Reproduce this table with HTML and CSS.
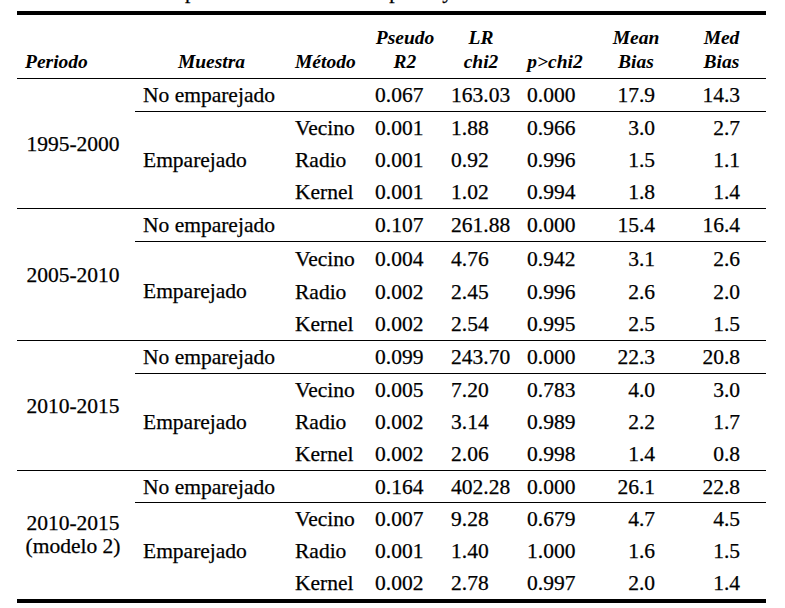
FILE: index.html
```html
<!DOCTYPE html>
<html lang="es">
<head>
<meta charset="utf-8">
<title>Calidad del emparejamiento</title>
<link rel="stylesheet" href="styles.css">
</head>
<body>
<div class="caption">Cuadro 4. Comparación de calidad del pareo y balance</div>
<table class="tbl">
  <colgroup>
    <col class="w1"><col class="w2"><col class="w3"><col class="w4"><col class="w5"><col class="w6"><col class="w7"><col class="w8">
  </colgroup>
  <thead>
    <tr class="head">
      <th class="h-per">Periodo</th>
      <th class="h-mue">Muestra</th>
      <th class="h-met">Método</th>
      <th class="h-ps">Pseudo<br>R2</th>
      <th class="h-lr">LR<br>chi2</th>
      <th class="h-p">p&gt;chi2</th>
      <th class="h-mean">Mean<br>Bias</th>
      <th class="h-med">Med<br>Bias</th>
    </tr>
  </thead>
  <tbody>
    <tr class="g1">
      <td class="c-per ln" rowspan="4">1995-2000</td>
      <td class="c-mue ln" colspan="2">No emparejado</td>
      <td class="c-num ln">0.067</td><td class="c-num ln">163.03</td><td class="c-num ln">0.000</td><td class="c-r7 ln">17.9</td><td class="c-r8 ln">14.3</td>
    </tr>
    <tr class="g1">
      <td class="c-mue ln" rowspan="3">Emparejado</td>
      <td class="c-met">Vecino</td><td class="c-num">0.001</td><td class="c-num">1.88</td><td class="c-num">0.966</td><td class="c-r7">3.0</td><td class="c-r8">2.7</td>
    </tr>
    <tr class="g1">
      <td class="c-met">Radio</td><td class="c-num">0.001</td><td class="c-num">0.92</td><td class="c-num">0.996</td><td class="c-r7">1.5</td><td class="c-r8">1.1</td>
    </tr>
    <tr class="g1">
      <td class="c-met ln">Kernel</td><td class="c-num ln">0.001</td><td class="c-num ln">1.02</td><td class="c-num ln">0.994</td><td class="c-r7 ln">1.8</td><td class="c-r8 ln">1.4</td>
    </tr>

    <tr class="g2">
      <td class="c-per ln" rowspan="4">2005-2010</td>
      <td class="c-mue ln" colspan="2">No emparejado</td>
      <td class="c-num ln">0.107</td><td class="c-num ln">261.88</td><td class="c-num ln">0.000</td><td class="c-r7 ln">15.4</td><td class="c-r8 ln">16.4</td>
    </tr>
    <tr class="g2">
      <td class="c-mue ln" rowspan="3">Emparejado</td>
      <td class="c-met">Vecino</td><td class="c-num">0.004</td><td class="c-num">4.76</td><td class="c-num">0.942</td><td class="c-r7">3.1</td><td class="c-r8">2.6</td>
    </tr>
    <tr class="g2">
      <td class="c-met">Radio</td><td class="c-num">0.002</td><td class="c-num">2.45</td><td class="c-num">0.996</td><td class="c-r7">2.6</td><td class="c-r8">2.0</td>
    </tr>
    <tr class="g2">
      <td class="c-met ln">Kernel</td><td class="c-num ln">0.002</td><td class="c-num ln">2.54</td><td class="c-num ln">0.995</td><td class="c-r7 ln">2.5</td><td class="c-r8 ln">1.5</td>
    </tr>

    <tr class="g3">
      <td class="c-per ln" rowspan="4">2010-2015</td>
      <td class="c-mue ln" colspan="2">No emparejado</td>
      <td class="c-num ln">0.099</td><td class="c-num ln">243.70</td><td class="c-num ln">0.000</td><td class="c-r7 ln">22.3</td><td class="c-r8 ln">20.8</td>
    </tr>
    <tr class="g3">
      <td class="c-mue ln" rowspan="3">Emparejado</td>
      <td class="c-met">Vecino</td><td class="c-num">0.005</td><td class="c-num">7.20</td><td class="c-num">0.783</td><td class="c-r7">4.0</td><td class="c-r8">3.0</td>
    </tr>
    <tr class="g3">
      <td class="c-met">Radio</td><td class="c-num">0.002</td><td class="c-num">3.14</td><td class="c-num">0.989</td><td class="c-r7">2.2</td><td class="c-r8">1.7</td>
    </tr>
    <tr class="g3">
      <td class="c-met ln">Kernel</td><td class="c-num ln">0.002</td><td class="c-num ln">2.06</td><td class="c-num ln">0.998</td><td class="c-r7 ln">1.4</td><td class="c-r8 ln">0.8</td>
    </tr>

    <tr class="g4">
      <td class="c-per two" rowspan="4">2010-2015<br>(modelo 2)</td>
      <td class="c-mue ln" colspan="2">No emparejado</td>
      <td class="c-num ln">0.164</td><td class="c-num ln">402.28</td><td class="c-num ln">0.000</td><td class="c-r7 ln">26.1</td><td class="c-r8 ln">22.8</td>
    </tr>
    <tr class="g4">
      <td class="c-mue" rowspan="3">Emparejado</td>
      <td class="c-met">Vecino</td><td class="c-num">0.007</td><td class="c-num">9.28</td><td class="c-num">0.679</td><td class="c-r7">4.7</td><td class="c-r8">4.5</td>
    </tr>
    <tr class="g4">
      <td class="c-met">Radio</td><td class="c-num">0.001</td><td class="c-num">1.40</td><td class="c-num">1.000</td><td class="c-r7">1.6</td><td class="c-r8">1.5</td>
    </tr>
    <tr class="g4">
      <td class="c-met">Kernel</td><td class="c-num">0.002</td><td class="c-num">2.78</td><td class="c-num">0.997</td><td class="c-r7">2.0</td><td class="c-r8">1.4</td>
    </tr>
  </tbody>
</table>
</body>
</html>
```
FILE: styles.css
```css
html, body {
  margin: 0;
  padding: 0;
  background: #ffffff;
}

body {
  font-family: "Liberation Serif", "Times New Roman", serif;
  color: #000;
}

.caption {
  margin: -19.75px 0 8.75px 0;
  padding-left: 53px;
  font-size: 21.5px;
  line-height: 22px;
  white-space: nowrap;
  -webkit-text-stroke: 0.25px #000;
}

.tbl {
  margin-left: 17px;
  width: 749px;
  table-layout: fixed;
  border-collapse: separate;
  border-spacing: 0;
  border-top: 4px solid #000;
  border-bottom: 4px solid #000;
}

.w1 { width: 118px; }
.w2 { width: 153px; }
.w3 { width: 79px; }
.w4 { width: 76px; }
.w5 { width: 76px; }
.w6 { width: 78px; }
.w7 { width: 83px; }
.w8 { width: 86px; }

.head { height: 64px; }
.g1 { height: 32.5px; }
.g2 { height: 33px; }
.g3 { height: 32.5px; }
.g4 { height: 32px; }

.tbl th {
  font-size: 19.5px;
  font-weight: bold;
  font-style: italic;
  line-height: 24px;
  vertical-align: bottom;
  padding: 0 0 4px 0;
  border-bottom: 1px solid #000;
  white-space: nowrap;
  text-align: center;
}

.tbl th.h-per { text-align: left; padding-left: 8px; }
.tbl th.h-met { text-align: left; padding-left: 7px; }
.tbl th.h-ps { padding-left: 8px; padding-right: 8px; }
.tbl th.h-p { padding-right: 6px; }
.tbl th.h-mean { padding-right: 5px; }
.tbl th.h-med { padding-right: 3px; }

.tbl td {
  font-size: 21.5px;
  line-height: 24px;
  padding: 0;
  vertical-align: middle;
  white-space: nowrap;
  -webkit-text-stroke: 0.25px #000;
}

.tbl td.c-per { text-align: center; padding-right: 6px; }
.tbl td.two { line-height: 23px; }
.tbl td.c-mue { text-align: left; padding-left: 8px; }
.tbl td.c-met { text-align: left; padding-left: 7px; }
.tbl td.c-num { text-align: left; padding-left: 8px; }
.tbl td.c-r7 { text-align: right; padding-right: 25px; }
.tbl td.c-r8 { text-align: right; padding-right: 26px; }

.tbl .ln { border-bottom: 1px solid #000; }
```
